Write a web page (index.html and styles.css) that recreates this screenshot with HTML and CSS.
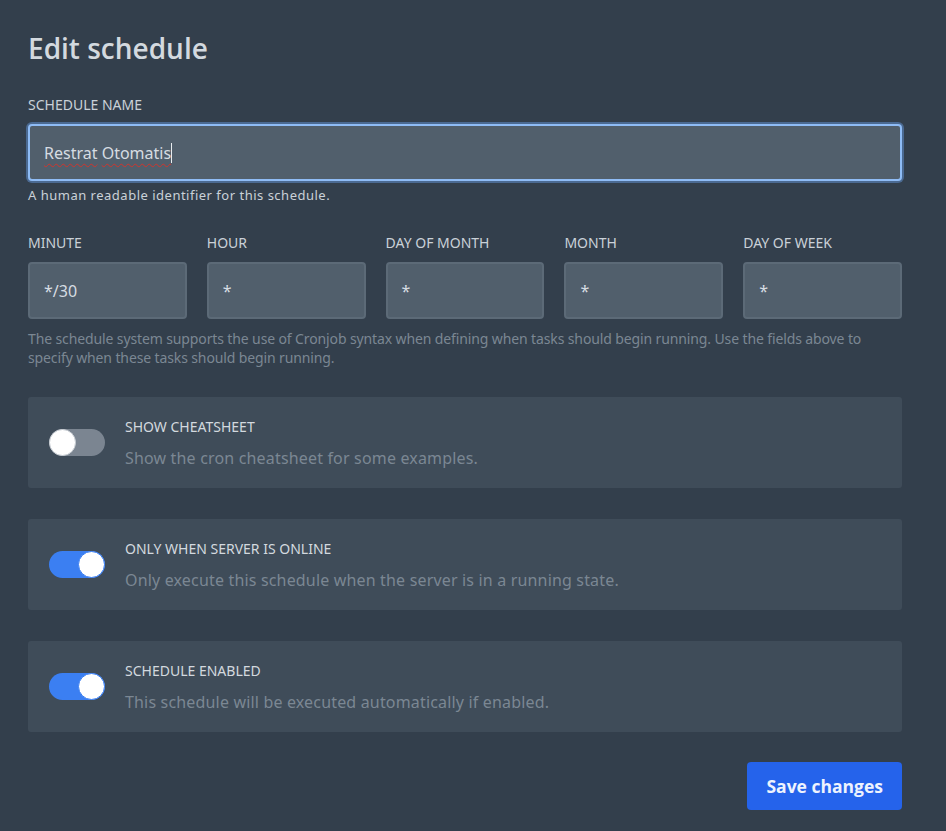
FILE: index.html
```html
<!DOCTYPE html>
<html>
<head>
<meta charset="utf-8">
<link rel="stylesheet" href="styles.css">
</head>
<body>
<div class="page">
  <h1 class="title">Edit schedule</h1>

  <label class="label">Schedule name</label>
  <div class="input focus"><span class="value"><span class="spell">Restrat</span> <span class="spell">Otomatis</span></span><span class="caret"></span></div>
  <p class="help">A human readable identifier for this schedule.</p>

  <div class="cron">
    <div class="field"><label class="label">Minute</label><div class="input">*/30</div></div>
    <div class="field"><label class="label">Hour</label><div class="input">*</div></div>
    <div class="field"><label class="label">Day of month</label><div class="input">*</div></div>
    <div class="field"><label class="label">Month</label><div class="input">*</div></div>
    <div class="field"><label class="label">Day of week</label><div class="input">*</div></div>
  </div>
  <p class="help muted">The schedule system supports the use of Cronjob syntax when defining when tasks should begin running. Use the fields above to specify when these tasks should begin running.</p>

  <div class="box">
    <span class="toggle"><span class="knob"></span></span>
    <div class="box-text">
      <div class="box-title">Show Cheatsheet</div>
      <div class="box-desc">Show the cron cheatsheet for some examples.</div>
    </div>
  </div>
  <div class="box">
    <span class="toggle on"><span class="knob"></span></span>
    <div class="box-text">
      <div class="box-title">Only When Server Is Online</div>
      <div class="box-desc">Only execute this schedule when the server is in a running state.</div>
    </div>
  </div>
  <div class="box">
    <span class="toggle on"><span class="knob"></span></span>
    <div class="box-text">
      <div class="box-title">Schedule Enabled</div>
      <div class="box-desc">This schedule will be executed automatically if enabled.</div>
    </div>
  </div>

  <div class="actions"><button class="btn">Save changes</button></div>
</div>
</body>
</html>
```
FILE: styles.css
```css
html, body {
  margin: 0;
  padding: 0;
  background: #333f4c;
  height: 100%;
}
body {
  font-family: "Noto Sans", "Open Sans", sans-serif;
  color: #cad1d8;
}
.page {
  padding: 28px 44px 0 28px;
  display: flex;
  flex-direction: column;
}
.title {
  margin: 0 0 27px;
  font-family: "Open Sans", sans-serif;
  font-size: 28px;
  font-weight: 600;
  line-height: 40px;
  color: #d3d9df;
}
.label {
  display: block;
  font-size: 14px;
  line-height: 20px;
  text-transform: uppercase;
  color: #cad1d8;
  margin-bottom: 9px;
}
.input {
  box-sizing: border-box;
  height: 57px;
  background: #515f6c;
  border: 2px solid #5c6a77;
  border-radius: 4px;
  padding: 0 14px;
  display: flex;
  align-items: center;
  font-size: 16px;
  color: #d6dce2;
}
.input.focus {
  border-color: #8fbcf5;
  box-shadow: 0 0 0 2px #4b6a92;
}
.value { white-space: pre; }
.spell {
  text-decoration: underline wavy #d0342c;
  text-decoration-thickness: 1px;
  text-underline-offset: 4px;
}
.caret {
  display: inline-block;
  width: 1px;
  height: 20px;
  background: #e8ecef;
}
.help {
  margin: 5px 0 0;
  font-size: 13px;
  letter-spacing: 0.5px;
  line-height: 18px;
  color: #cad1d8;
}
.help.muted {
  margin-top: 10px;
  font-size: 14px;
  letter-spacing: -0.12px;
  line-height: 19px;
  color: #7b8793;
  padding-right: 20px;
}
.cron {
  margin-top: 29px;
  display: grid;
  grid-template-columns: repeat(5, 1fr);
  gap: 20px;
}
.box {
  margin-top: 30px;
  height: 91px;
  box-sizing: border-box;
  background: #3f4c59;
  border-radius: 3px;
  display: flex;
  align-items: center;
  padding-left: 21px;
  gap: 20px;
}
.box + .box { margin-top: 31px; }
.toggle {
  position: relative;
  width: 56px;
  height: 27px;
  border-radius: 14px;
  background: #7b8591;
  flex: none;
}
.toggle .knob {
  position: absolute;
  top: 0;
  left: 0;
  width: 25px;
  height: 25px;
  border: 1px solid #c9ced4;
  border-radius: 50%;
  background: #fff;
}
.toggle.on { background: #3b7ff2; }
.toggle.on .knob { left: auto; right: 0; border-color: #3b7ff2; }
.box-text { display: flex; flex-direction: column; gap: 10px; }
.box-title {
  font-size: 14px;
  line-height: 20px;
  text-transform: uppercase;
  color: #d3d9df;
}
.box-desc {
  font-size: 16px;
  letter-spacing: 0.17px;
  line-height: 22px;
  color: #7b8793;
}
.actions {
  margin-top: 30px;
  display: flex;
  justify-content: flex-end;
}
.btn {
  height: 48px;
  padding: 0 19px;
  border: none;
  border-radius: 4px;
  background: #2563eb;
  color: #eef3fe;
  font-family: "Open Sans", sans-serif;
  font-size: 17.5px;
  font-weight: 700;
}
```
